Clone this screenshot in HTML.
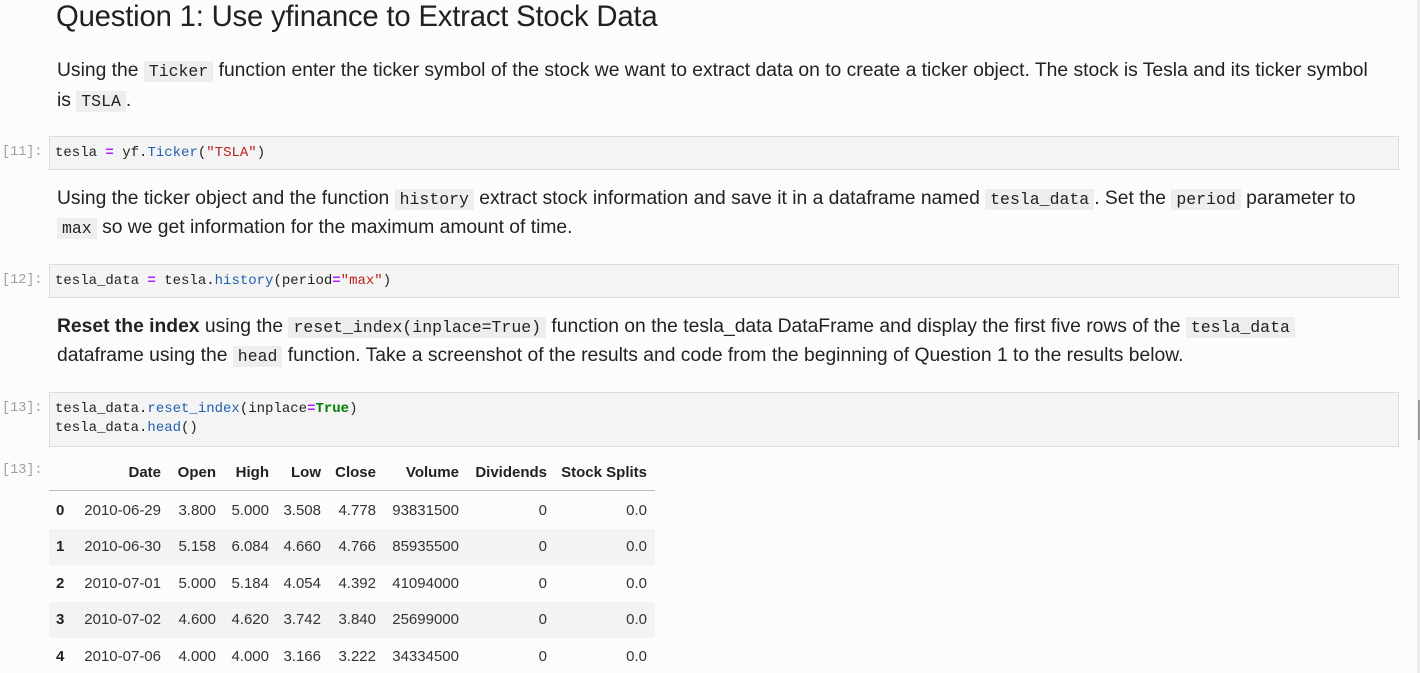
<!DOCTYPE html>
<html><head><meta charset="utf-8"><style>
*{margin:0;padding:0;box-sizing:border-box}
body{width:1420px;height:673px;background:#fcfcfc;position:relative;overflow:hidden;font-family:"Liberation Sans",sans-serif;color:#1f1f1f}
.sb{position:absolute;left:1417px;top:0;width:3px;height:673px;background:#ececec}
.thumb{position:absolute;left:1418px;top:400px;width:2px;height:40px;background:#9a9a9a}
h1{position:absolute;left:56px;top:0px;font-size:29.3px;font-weight:normal;color:#202020;white-space:nowrap;letter-spacing:-0.2px}
.p{position:absolute;left:57px;font-size:19.3px;white-space:nowrap;line-height:29px;color:#222}
code{font-family:"Liberation Mono",monospace;font-size:16.5px;background:#eeeeee;padding:1px 5px;color:#222}
.cell{position:absolute;left:49px;width:1350px;background:#f4f4f4;border:1px solid #dcdcdc;font-family:"Liberation Mono",monospace;font-size:14px;line-height:19px;padding:7px 5px 5px;color:#222;white-space:pre}
.pr{position:absolute;left:2px;font-family:"Liberation Mono",monospace;font-size:13.5px;color:#a0a0a0}
.o{color:#aa22ff;font-weight:bold}.f{color:#2060b0}.s{color:#ba2121}.k{color:#008000;font-weight:bold}
.t{position:absolute;font-size:15px;white-space:nowrap;color:#333}
.b{font-weight:bold;color:#222}
.stripe{position:absolute;left:49px;width:606px;height:36px;background:#f3f3f3}
</style></head><body>
<div class="sb"></div><div class="thumb"></div>
<h1>Question 1: Use yfinance to Extract Stock Data</h1>
<div class="p" style="top:56px">Using the <code>Ticker</code> function enter the ticker symbol of the stock we want to extract data on to create a ticker object. The stock is Tesla and its ticker symbol</div>
<div class="p" style="top:86px">is <code>TSLA</code>.</div>
<div class="pr" style="top:145px">[11]:</div>
<div class="cell" style="top:136px;height:34px">tesla <span class="o">=</span> yf<span>.</span><span class="f">Ticker</span>(<span class="s">"TSLA"</span>)</div>
<div class="p" style="top:184px">Using the ticker object and the function <code>history</code> extract stock information and save it in a dataframe named <code>tesla_data</code>. Set the <code>period</code> parameter to</div>
<div class="p" style="top:213px"><code>max</code> so we get information for the maximum amount of time.</div>
<div class="pr" style="top:273px">[12]:</div>
<div class="cell" style="top:264px;height:34px">tesla_data <span class="o">=</span> tesla.<span class="f">history</span>(period<span class="o">=</span><span class="s">"max"</span>)</div>
<div class="p" style="top:312px"><b>Reset the index</b> using the <code>reset_index(inplace=True)</code> function on the tesla_data DataFrame and display the first five rows of the <code>tesla_data</code></div>
<div class="p" style="top:341px">dataframe using the <code>head</code> function. Take a screenshot of the results and code from the beginning of Question 1 to the results below.</div>
<div class="pr" style="top:401px">[13]:</div>
<div class="cell" style="top:392px;height:55px">tesla_data.<span class="f">reset_index</span>(inplace<span class="o">=</span><span class="k">True</span>)
tesla_data.<span class="f">head</span>()</div>
<div class="pr" style="top:463px">[13]:</div>
<div class="stripe" style="top:529px"></div>
<div class="stripe" style="top:602px"></div>
<div style="position:absolute;left:49px;top:490px;width:606px;height:1px;background:#bdbdbd"></div>
<div id="tbl"></div>
<script>
var rights=[161,216,269,321,376,459,547,647];
var hdr=["Date","Open","High","Low","Close","Volume","Dividends","Stock Splits"];
var rows=[["2010-06-29","3.800","5.000","3.508","4.778","93831500","0","0.0"],
["2010-06-30","5.158","6.084","4.660","4.766","85935500","0","0.0"],
["2010-07-01","5.000","5.184","4.054","4.392","41094000","0","0.0"],
["2010-07-02","4.600","4.620","3.742","3.840","25699000","0","0.0"],
["2010-07-06","4.000","4.000","3.166","3.222","34334500","0","0.0"]];
var h="";
function cell(x,y,t,c){h+='<div class="t '+(c||'')+'" style="right:'+(1420-x)+'px;top:'+y+'px">'+t+'</div>';}
hdr.forEach(function(t,i){cell(rights[i],464,t,'b');});
var ys=[502,538,575,611,648];
rows.forEach(function(r,j){h+='<div class="t b" style="left:56px;top:'+ys[j]+'px">'+j+'</div>';r.forEach(function(t,i){cell(rights[i],ys[j],t);});});
document.getElementById('tbl').innerHTML=h;
</script>
</body></html>
